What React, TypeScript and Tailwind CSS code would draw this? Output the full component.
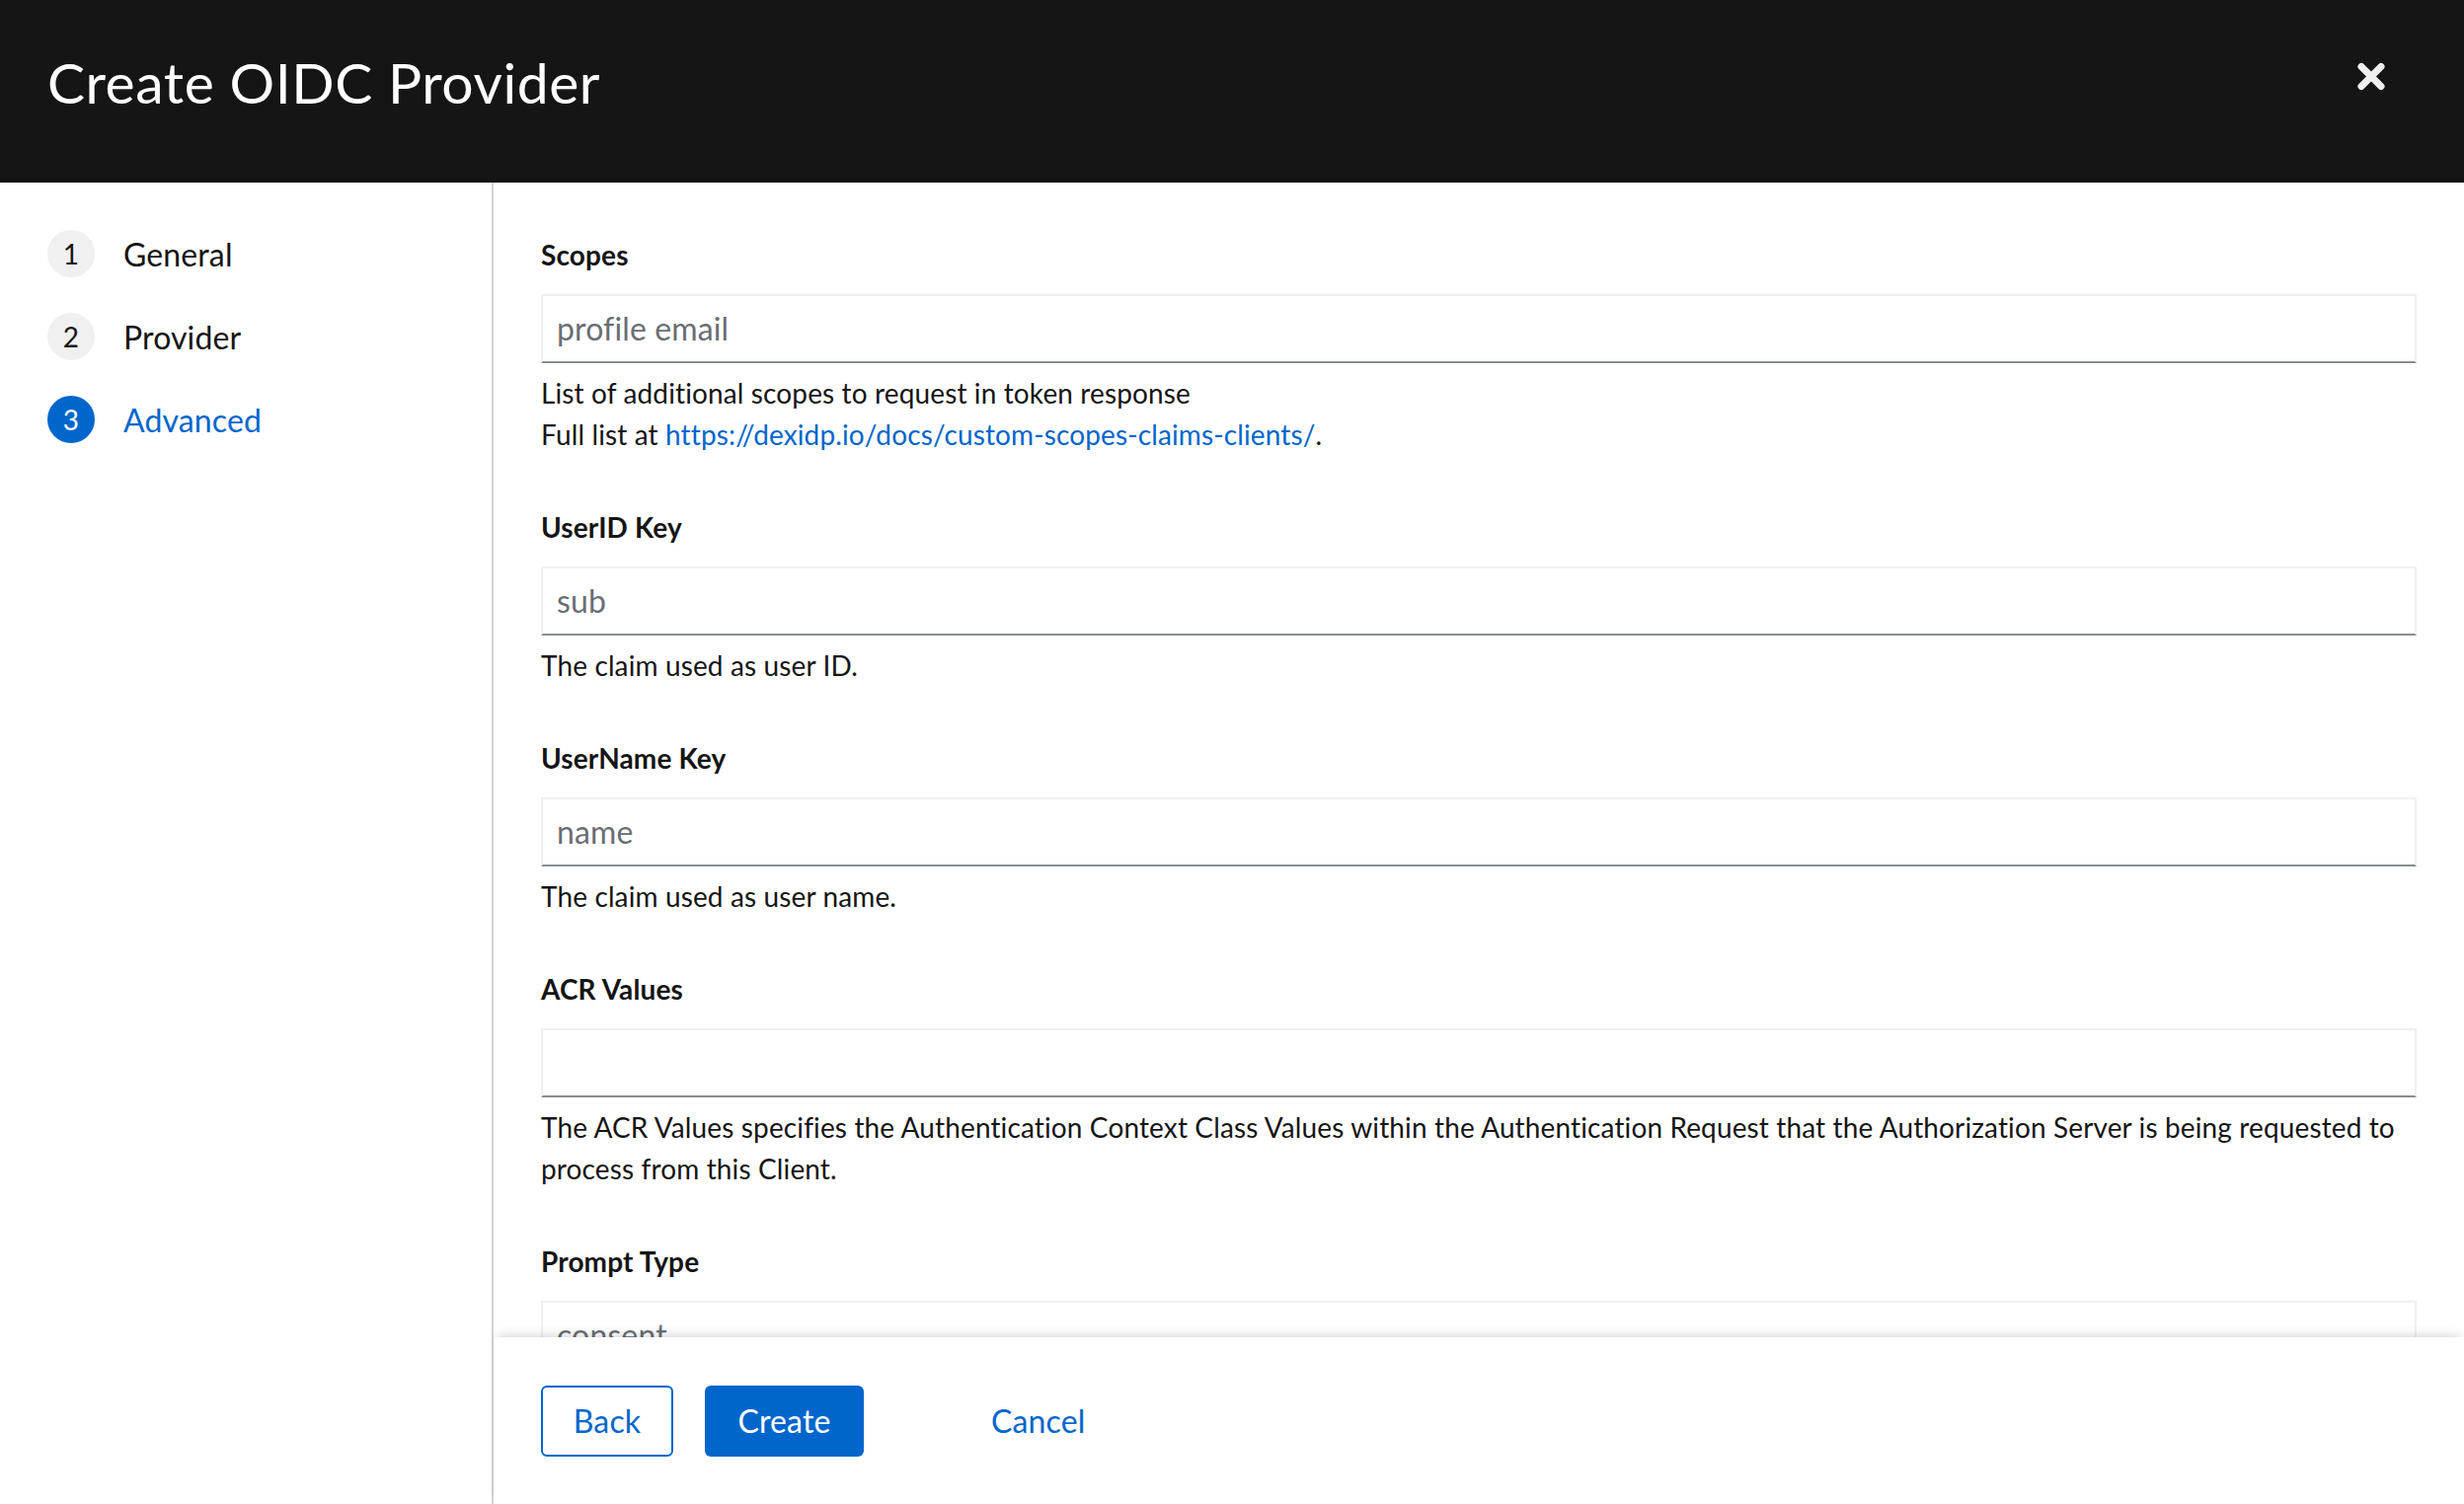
import React from "react";

const steps = [
  { n: 1, label: "General", active: false },
  { n: 2, label: "Provider", active: false },
  { n: 3, label: "Advanced", active: true },
];

function Field({
  label,
  placeholder,
  children,
}: {
  label: string;
  placeholder: string;
  children: React.ReactNode;
}) {
  return (
    <div>
      <div className="h-[42px] text-[28px] leading-[42px] font-bold text-[#151515]">{label}</div>
      <div className="mt-[19px] h-[70px] border-2 border-[#f0f0f0] border-b-[#8a8d90] flex items-center px-[14px] text-[32px] text-[#6a6e73]">
        {placeholder}
      </div>
      <div className="mt-[9px] text-[28px] leading-[42px] text-[#151515]">{children}</div>
    </div>
  );
}

export default function App() {
  return (
    <div className="h-screen flex flex-col bg-white font-['Lato',sans-serif] tracking-[0.008em] overflow-hidden">
      {/* Header */}
      <div className="h-[185px] shrink-0 bg-[#151515] flex items-start justify-between pl-[48px] pr-[80px]">
        <h1 className="mt-[50px] text-[57px] leading-[67px] tracking-[0.01em] text-white">Create OIDC Provider</h1>
        <button className="mt-[63px]">
          <svg width="28" height="29" viewBox="0 0 28 29">
            <path d="M4 4.5L24 24.5M24 4.5L4 24.5" stroke="#f0f0f0" strokeWidth="7" strokeLinecap="round" />
          </svg>
        </button>
      </div>

      <div className="flex-1 flex min-h-0">
        {/* Steps nav */}
        <div className="w-[500px] shrink-0 border-r-2 border-[#d2d2d2] pt-[48px] pl-[48px] flex flex-col gap-[36px]">
          {steps.map((s) => (
            <div key={s.n} className="flex items-center h-[48px]">
              <div
                className={`w-[48px] h-[48px] rounded-full flex items-center justify-center text-[28px] ${
                  s.active ? "bg-[#0066cc] text-white" : "bg-[#f0f0f0] text-[#151515]"
                }`}
              >
                {s.n}
              </div>
              <span className={`ml-[29px] mt-[2px] text-[32px] ${s.active ? "text-[#0066cc]" : "text-[#151515]"}`}>
                {s.label}
              </span>
            </div>
          ))}
        </div>

        {/* Main + footer */}
        <div className="flex-1 flex flex-col min-w-0">
          <div className="flex-1 min-h-0 overflow-hidden px-[48px] pt-[52px] flex flex-col gap-[52px]">
            <Field label="Scopes" placeholder="profile email">
              List of additional scopes to request in token response
              <br />
              Full list at{" "}
              <a className="text-[#0066cc]" href="#">
                https://dexidp.io/docs/custom-scopes-claims-clients/
              </a>
              .
            </Field>
            <Field label="UserID Key" placeholder="sub">
              The claim used as user ID.
            </Field>
            <Field label="UserName Key" placeholder="name">
              The claim used as user name.
            </Field>
            <Field label="ACR Values" placeholder="">
              The ACR Values specifies the Authentication Context Class Values within the Authentication Request that
              the Authorization Server is being requested to process from this Client.
            </Field>
            <Field label="Prompt Type" placeholder="consent">
              Used to specify whether the Authorization Server prompts the End-User for reauthentication and consent.
            </Field>
          </div>

          {/* Footer */}
          <div className="relative z-10 h-[169px] shrink-0 bg-white shadow-[0_-6px_10px_-4px_rgba(3,3,3,0.16)] pl-[48px] pt-[49px] flex items-start">
            <button className="h-[72px] w-[134px] rounded-[6px] border-2 border-[#0066cc] text-[#0066cc] text-[32px]">
              Back
            </button>
            <button className="ml-[32px] h-[72px] w-[161px] rounded-[6px] bg-[#0066cc] text-white text-[32px]">
              Create
            </button>
            <button className="ml-[97px] h-[72px] px-[32px] text-[#0066cc] text-[32px]">Cancel</button>
          </div>
        </div>
      </div>
    </div>
  );
}
